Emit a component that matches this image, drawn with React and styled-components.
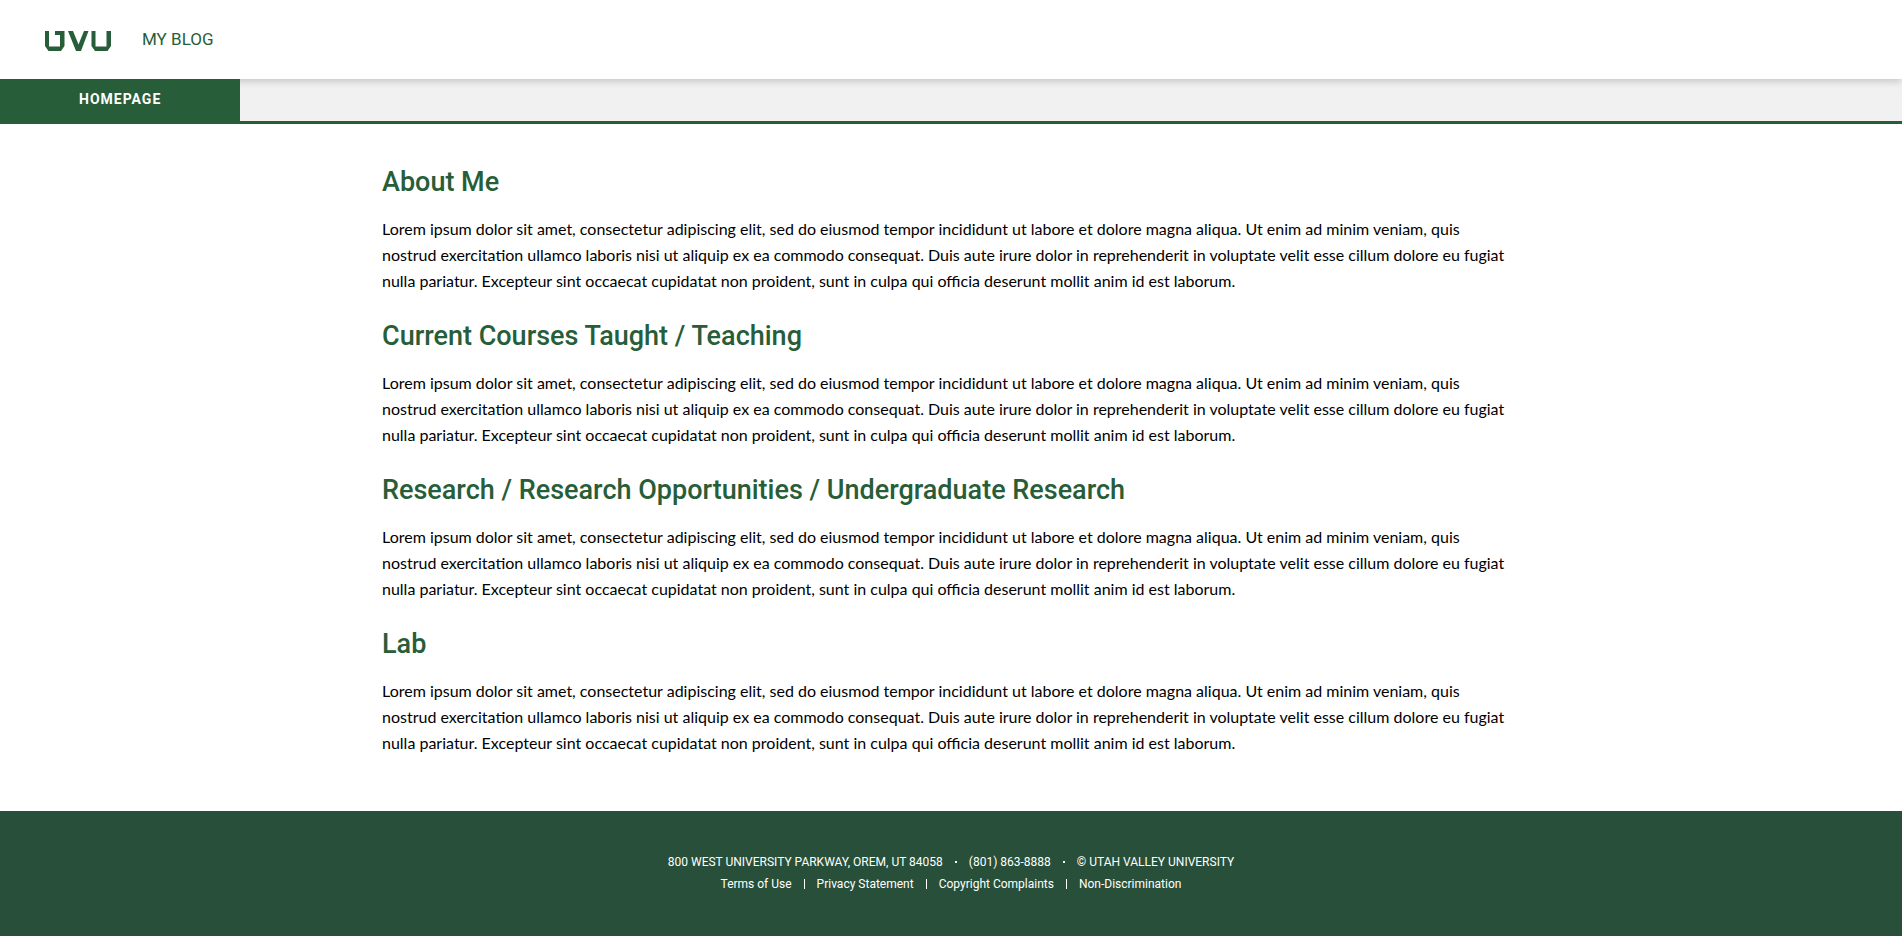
import React from "react";
import styled, { createGlobalStyle } from "styled-components";

const GlobalStyle = createGlobalStyle`
  * { box-sizing: border-box; }
  body {
    margin: 0;
    background: #fff;
    color: #000;
    font-family: Lato, "Liberation Sans", sans-serif;
    font-size: 16px;
    line-height: 26px;
  }
`;

const display = `font-family: Roboto, "Liberation Sans", sans-serif;`;

const Page = styled.div`
  display: flex;
  flex-direction: column;
  min-height: 100vh;
`;

const Header = styled.header`
  position: relative;
  display: flex;
  align-items: center;
  gap: 31px;
  height: 79px;
  padding: 0 45px;
  background: #fff;
  box-shadow: 0 2px 8px rgba(0, 0, 0, 0.2);
`;

const LogoLink = styled.a`
  display: flex;
  padding-top: 3px;
`;

const SiteTitle = styled.a`
  ${display}
  padding-bottom: 2px;
  color: #275d38;
  font-size: 17px;
  line-height: 24px;
  text-decoration: none;
  text-transform: uppercase;
`;

const Nav = styled.nav`
  display: flex;
  height: 45px;
  background: #f1f1f1;
  border-bottom: 3px solid #275d38;
`;

const NavLink = styled.a`
  ${display}
  position: relative;
  padding: 0 79px;
  background: #275d38;
  color: #fff;
  font-size: 14px;
  font-weight: 700;
  line-height: 40px;
  letter-spacing: 1px;
  text-decoration: none;
  text-transform: uppercase;
`;

const Main = styled.main`
  flex: 1;
  display: flex;
  flex-direction: column;
  gap: 24px;
  width: 100%;
  max-width: 1138px;
  margin: 0 auto;
  padding: 40px 0 53px;
`;

const Heading = styled.h2`
  ${display}
  margin: 0 0 16px;
  color: #275d38;
  font-size: 27px;
  font-weight: 500;
  line-height: 36px;
`;

const Text = styled.p`
  max-width: 1132px;
  margin: 0;
`;

const Footer = styled.footer`
  ${display}
  padding: 40px 20px 41px;
  background: #284f39;
  color: #fff;
  font-size: 12px;
  line-height: 22px;
`;

const FooterRow = styled.div`
  display: flex;
  flex-wrap: wrap;
  justify-content: center;
  gap: 12px;
  text-transform: ${(p) => (p.$upper ? "uppercase" : "none")};
`;

const FooterLink = styled.a`
  color: inherit;
  text-decoration: none;
`;

const Bar = styled.span`
  align-self: center;
  width: 1px;
  height: 10px;
  background: #fff;
`;

const Dot = styled.span`
  align-self: center;
  width: 2px;
  height: 2px;
  background: #fff;
`;

const Logo = () => (
  <svg width="66" height="20" viewBox="0 0 66 20" fill="#275d38" aria-hidden="true">
    <path d="M0 0H4V15.500H15V4H10V0H19.500V15L16 20H3.500L0 15Z" />
    <path d="M23 0H28L33.500 13.500L39 0H43.500L36 20H31Z" />
    <path d="M46.500 0H50.500V15.500H61.500V0H66V15L62.500 20H50L46.500 15Z" />
  </svg>
);

const lorem =
  "Lorem ipsum dolor sit amet, consectetur adipiscing elit, sed do eiusmod tempor incididunt ut labore et dolore magna aliqua. Ut enim ad minim veniam, quis nostrud exercitation ullamco laboris nisi ut aliquip ex ea commodo consequat. Duis aute irure dolor in reprehenderit in voluptate velit esse cillum dolore eu fugiat nulla pariatur. Excepteur sint occaecat cupidatat non proident, sunt in culpa qui officia deserunt mollit anim id est laborum.";

const sections = [
  "About Me",
  "Current Courses Taught / Teaching",
  "Research / Research Opportunities / Undergraduate Research",
  "Lab",
];

const links = ["Terms of Use", "Privacy Statement", "Copyright Complaints", "Non-Discrimination"];

export default function App() {
  return (
    <Page>
      <GlobalStyle />
      <Header>
        <LogoLink href="#" aria-label="UVU">
          <Logo />
        </LogoLink>
        <SiteTitle href="#">My Blog</SiteTitle>
      </Header>
      <Nav>
        <NavLink href="#">Homepage</NavLink>
      </Nav>
      <Main>
        {sections.map((title) => (
          <section key={title}>
            <Heading>{title}</Heading>
            <Text>{lorem}</Text>
          </section>
        ))}
      </Main>
      <Footer>
        <FooterRow $upper>
          <span>800 West University Parkway, Orem, UT 84058</span>
          <Dot />
          <span>(801) 863-8888</span>
          <Dot />
          <span>© Utah Valley University</span>
        </FooterRow>
        <FooterRow>
          {links.map((label, i) => (
            <React.Fragment key={label}>
              {i > 0 && <Bar />}
              <FooterLink href="#">{label}</FooterLink>
            </React.Fragment>
          ))}
        </FooterRow>
      </Footer>
    </Page>
  );
}
